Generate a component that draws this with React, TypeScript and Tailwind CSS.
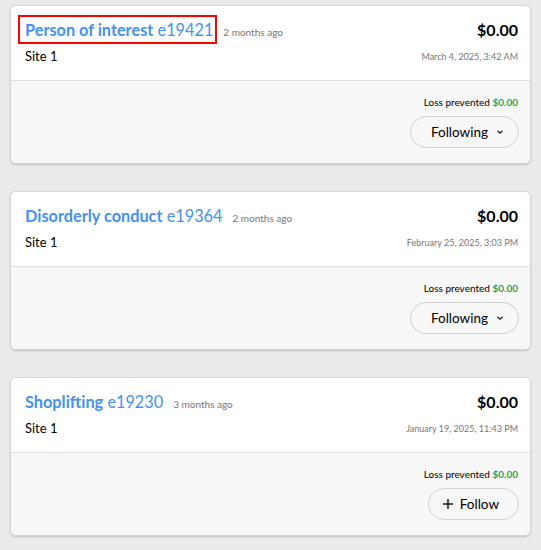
import React from "react";

type Item = {
  title: string;
  id: string;
  ago: string;
  date: string;
  following: boolean;
  highlight?: boolean;
};

const items: Item[] = [
  { title: "Person of interest", id: "e19421", ago: "2 months ago", date: "March 4, 2025, 3:42 AM", following: true, highlight: true },
  { title: "Disorderly conduct", id: "e19364", ago: "2 months ago", date: "February 25, 2025, 3:03 PM", following: true },
  { title: "Shoplifting", id: "e19230", ago: "3 months ago", date: "January 19, 2025, 11:43 PM", following: false },
];

function Card({ item }: { item: Item }) {
  return (
    <div className="rounded-[6px] border border-[#d6d6d6] bg-white shadow-[0_1px_2px_rgba(0,0,0,0.18)] overflow-hidden">
      <div className="pl-[14px] pr-[12px] pt-[12px] pb-[11px] border-b border-[#e0e0e0] bg-white">
        <div className="flex items-center justify-between h-[24px]">
          <div className="flex items-baseline">
            <span className="relative text-[16.3px] leading-[24px] text-[#4391f2]">
              <span className="font-bold">{item.title}</span> <span>{item.id}</span>
              {item.highlight && (
                <span className="absolute left-[-7px] right-[-4px] top-[-3px] bottom-[-2px] border-2 border-[#ff0000] pointer-events-none" />
              )}
            </span>
            <span className="ml-[10px] text-[10px] text-[#767676]">{item.ago}</span>
          </div>
          <span className="text-[16px] font-bold text-black">$0.00</span>
        </div>
        <div className="flex items-center justify-between mt-[3px] h-[24px]">
          <span className="text-[13px] text-black">Site 1</span>
          <span className="text-[9px] text-[#777]">{item.date}</span>
        </div>
      </div>
      <div className="bg-[#f7f7f7] pl-[12px] pr-[11px] pt-[14px] pb-[15px] flex flex-col items-end">
        <div className="text-[10px] leading-[14px] text-black pr-[1px]">
          Loss prevented <span className="font-bold text-[#1fa64f]">$0.00</span>
        </div>
        <button className="mt-[7px] h-[32px] rounded-full border border-[#cfcfcf] bg-[#f7f7f7] flex items-center text-[13.5px] text-black pl-[20px] pr-[13px]">
          {item.following ? (
            <>
              <span>Following</span>
              <svg width="10" height="10" viewBox="0 0 10 10" className="ml-[7px]">
                <path d="M2.5 3.8 L5 6.2 L7.5 3.8" fill="none" stroke="#222" strokeWidth="1.3" />
              </svg>
            </>
          ) : (
            <>
              <svg width="12" height="12" viewBox="0 0 12 12" className="mr-[6px] ml-[-7px]">
                <path d="M6 1 V11 M1 6 H11" fill="none" stroke="#111" strokeWidth="1.5" />
              </svg>
              <span>Follow</span>
              <span className="w-[6px]" />
            </>
          )}
        </button>
      </div>
    </div>
  );
}

export default function App() {
  return (
    <div
      className="min-h-[550px] bg-[#ebebeb] px-[10px] pt-[5px] pb-[14px] flex flex-col gap-[27px]"
      style={{ fontFamily: "Lato, 'Source Sans Pro', sans-serif" }}
    >
      {items.map((it) => (
        <Card key={it.id} item={it} />
      ))}
    </div>
  );
}
